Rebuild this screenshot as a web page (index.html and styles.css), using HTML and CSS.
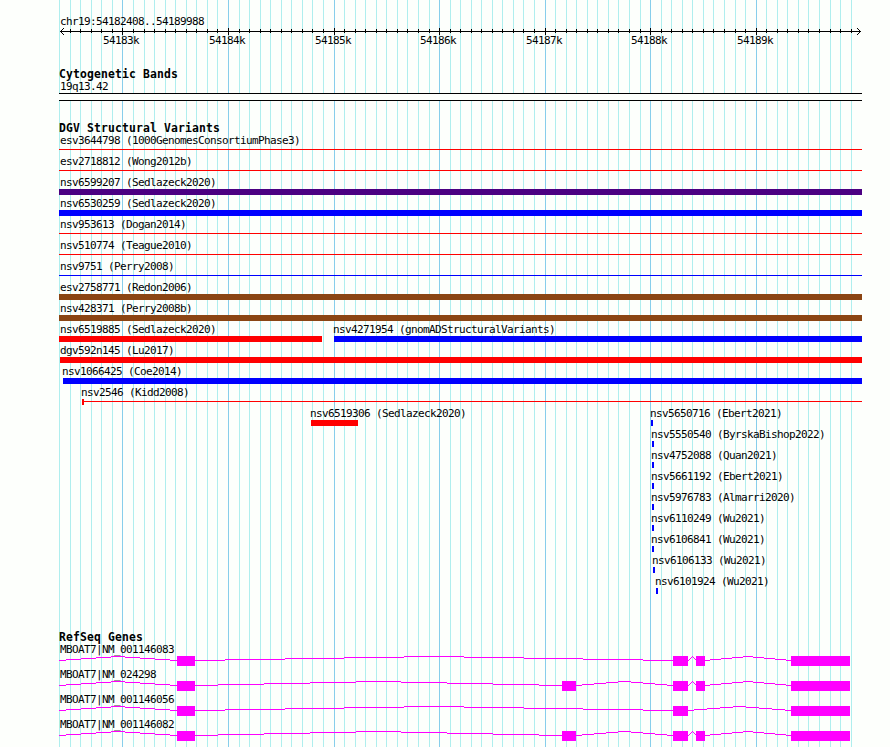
FILE: index.html
```html
<!DOCTYPE html>
<html lang="en">
<head>
  <meta charset="UTF-8">
  <title>chr19:54182408..54189988</title>
  <link rel="stylesheet" href="styles.css">
</head>
<body>
  <svg id="grid" class="grid" width="890" height="747"></svg>

  <main class="tracks">
    <section class="scale">
      <div class="label">chr19:54182408..54189988</div>
      <svg id="axis" class="axis" width="890" height="34"></svg>
    </section>

    <section class="bands">
      <h2>Cytogenetic Bands</h2>
      <div class="label">19q13.42</div>
      <div class="band"></div>
    </section>

    <section class="variants">
      <h2>DGV Structural Variants</h2>
      <div id="variants"></div>
    </section>

    <section class="genes">
      <h2>RefSeq Genes</h2>
      <div id="genes"></div>
    </section>
  </main>

  <script src="script.js"></script>
</body>
</html>
```

FILE: styles.css
```css
body {
  margin: 0;
  background: #fdfffc;
  font-family: "DejaVu Sans Mono", monospace;
  font-size: 11px;
  line-height: 13px;
  letter-spacing: -0.622px;
  color: black;
  overflow: hidden;
}

.grid {
  position: absolute;
  top: 0;
  left: 0;
}

.grid .minor {
  fill: #afeeee;
}

.grid .major {
  fill: #87ceeb;
}

.tracks {
  position: relative;
  width: 890px;
  height: 747px;
  overflow: hidden;
}

svg {
  display: block;
  shape-rendering: crispEdges;
}

h2 {
  margin: 0;
  padding-left: 59px;
  height: 12px;
  font-size: 11.4px;
  font-weight: bold;
  line-height: 13px;
  letter-spacing: 0.137px;
}

.label {
  padding-left: 60px;
  height: 12px;
  white-space: pre;
}

/* scale */
.scale {
  padding-top: 15px;
  height: 53px;
}

.axis line,
.axis path {
  stroke: black;
  fill: none;
}

/* cytogenetic bands */
.bands {
  height: 54px;
}

.band {
  margin: 1px 28px 0 59px;
  height: 6px;
  border-top: 1px solid black;
  border-bottom: 1px solid black;
  background: #fdfffc;
}

/* variants */
.variants {
  height: 509px;
}

.row {
  display: flex;
  height: 21px;
}

.feature {
  flex: none;
  white-space: pre;
}

.feature .name {
  height: 13px;
  margin-left: -1px;
}

.feature.edge .name {
  margin-left: 1px;
}

.feature.near .name {
  margin-left: 0;
}

.bar {
  height: 6px;
}

.thin .bar {
  height: 1px;
  margin-top: 2px;
}

.start .bar {
  border-left: 2px solid red;
  box-sizing: border-box;
  background: linear-gradient(transparent 2px, red 2px, red 3px, transparent 3px);
}

.red .bar { background-color: red; }
.blue .bar { background-color: blue; }
.indigo .bar { background-color: #4b0082; }
.brown .bar { background-color: #8b4513; }

/* genes */
.gene {
  height: 25px;
}

/* keeps underscores above the intron peaks */
.gene .label {
  position: relative;
  z-index: 1;
  height: 13px;
}

.gene svg path {
  stroke: magenta;
  fill: none;
}

.gene svg rect {
  fill: magenta;
}
```

FILE: script.js
```js
const NS = "http://www.w3.org/2000/svg";
const END = 862;

// [label, start, end, classes]
const variants = [
  [["esv3644798 (1000GenomesConsortiumPhase3)", 59, END, "red thin edge"]],
  [["esv2718812 (Wong2012b)", 59, END, "red thin edge"]],
  [["nsv6599207 (Sedlazeck2020)", 59, END, "indigo edge"]],
  [["nsv6530259 (Sedlazeck2020)", 59, END, "blue edge"]],
  [["nsv953613 (Dogan2014)", 59, END, "red thin edge"]],
  [["nsv510774 (Teague2010)", 59, END, "red thin edge"]],
  [["nsv9751 (Perry2008)", 59, END, "blue thin edge"]],
  [["esv2758771 (Redon2006)", 59, END, "brown edge"]],
  [["nsv428371 (Perry2008b)", 59, END, "brown edge"]],
  [["nsv6519885 (Sedlazeck2020)", 59, 322, "red edge"],
   ["nsv4271954 (gnomADStructuralVariants)", 334, END, "blue"]],
  [["dgv592n145 (Lu2017)", 60, END, "red near"]],
  [["nsv1066425 (Coe2014)", 63, END, "blue"]],
  [["nsv2546 (Kidd2008)", 82, END, "start"]],
  [["nsv6519306 (Sedlazeck2020)", 311, 358, "red"],
   ["nsv5650716 (Ebert2021)", 651, 653, "blue"]],
  [["nsv5550540 (ByrskaBishop2022)", 652, 654, "blue"]],
  [["nsv4752088 (Quan2021)", 652, 654, "blue"]],
  [["nsv5661192 (Ebert2021)", 652, 654, "blue"]],
  [["nsv5976783 (Almarri2020)", 652, 654, "blue"]],
  [["nsv6110249 (Wu2021)", 652, 654, "blue"]],
  [["nsv6106841 (Wu2021)", 652, 654, "blue"]],
  [["nsv6106133 (Wu2021)", 653, 655, "blue"]],
  [["nsv6101924 (Wu2021)", 656, 658, "blue"]]
];

const A = [177, 195], B = [562, 576], C = [673, 688], D = [696, 705], E = [791, 850];
const genes = [
  ["MBOAT7|NM_001146083", [A, C, D, E]],
  ["MBOAT7|NM_024298", [A, B, C, D, E]],
  ["MBOAT7|NM_001146056", [A, C, E]],
  ["MBOAT7|NM_001146082", [A, B, C, D, E]]
];

function add(parent, tag, attrs) {
  const el = document.createElementNS(NS, tag);
  for (const key in attrs) el.setAttribute(key, attrs[key]);
  parent.appendChild(el);
  return el;
}

function div(parent, className, text) {
  const el = document.createElement("div");
  el.className = className;
  if (text) el.textContent = text;
  parent.appendChild(el);
  return el;
}

// grid lines and axis ticks, one per 100 bp
const grid = document.getElementById("grid");
const axis = document.getElementById("axis");
add(axis, "path", { d: "M60 4.5H861" });
add(axis, "path", { d: "M63.5 1V2M62.5 2V3M61.5 3V4M61.5 5V6M62.5 6V7M63.5 7V8" });
add(axis, "path", { d: "M857.5 1V2M858.5 2V3M859.5 3V4M859.5 5V6M858.5 6V7M857.5 7V8" });
for (let i = 0; i <= 75; i++) {
  const x = Math.floor(59.61 + i * 10.554);
  const major = i % 10 === 6;
  add(grid, "rect", { x: x, y: 0, width: 1, height: 747, class: major ? "major" : "minor" });
  if (i > 0) {
    add(axis, "line", { x1: x + 0.5, x2: x + 0.5, y1: major ? 1 : 2, y2: major ? 8 : 6 });
  }
  if (major) {
    const t = add(axis, "text", { x: x - 19, y: 17 });
    t.textContent = 54183 + (i - 6) / 10 + "k";
  }
}

// variants
const list = document.getElementById("variants");
for (const features of variants) {
  const row = div(list, "row");
  let pos = 0;
  for (const [name, start, end, cls] of features) {
    const f = div(row, "feature " + cls);
    f.style.marginLeft = `${start - pos}px`;
    f.style.width = `${end - start}px`;
    div(f, "name", name);
    div(f, "bar");
    pos = end;
  }
}

// an intron climbs 4px to its middle and drops back, in whole pixel steps
function intronPath(from, to) {
  let d = "";
  let x = from;
  for (let k = 0; k <= 8; k++) {
    const next = k === 8 ? to : Math.round(from + (to - from) * (k + 0.5) / 8);
    const y = Math.abs(k - 4) + 0.5;
    d += `M${x} ${y}H${next}`;
    x = next;
  }
  return d;
}

// genes: exons as boxes, introns as peaked lines
const geneList = document.getElementById("genes");
for (const [name, exons] of genes) {
  const gene = div(geneList, "gene");
  div(gene, "label", name);
  const svg = add(gene, "svg", { width: 890, height: 12 });
  let from = 59;
  for (const [start, end] of exons) {
    add(svg, "path", { d: intronPath(from, start) });
    add(svg, "rect", { x: start, y: 0, width: end - start, height: 10 });
    from = end;
  }
}
```
